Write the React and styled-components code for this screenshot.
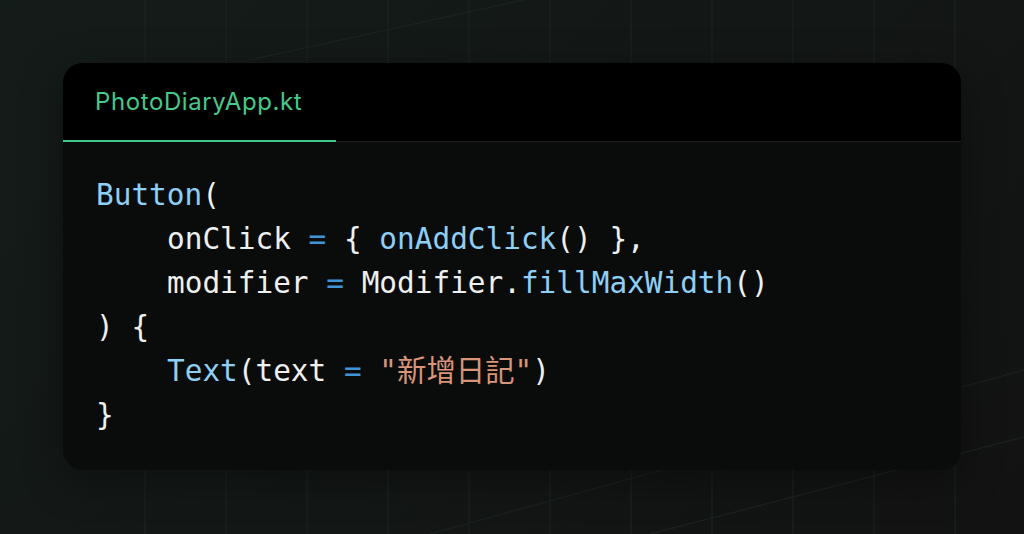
import React from "react";
import styled, { createGlobalStyle } from "styled-components";

const GlobalStyle = createGlobalStyle`
  html, body {
    margin: 0;
    padding: 0;
    background: #121414;
  }
`;

const Page = styled.main`
  position: relative;
  width: 1024px;
  height: 534px;
  overflow: hidden;
  box-sizing: border-box;
  padding: 63px 63px 0 63px;
  background: linear-gradient(135deg, #141c1a 0%, #131816 45%, #121212 100%);
`;

// background grid is decoration, drawn behind the card
const Grid = styled.svg`
  position: absolute;
  inset: 0;
  pointer-events: none;
`;

const Card = styled.section`
  position: relative;
  height: 407px;
  border-radius: 20px;
  overflow: hidden;
  background: #0a0c0c;
  box-shadow: 0 10px 40px rgba(0, 0, 0, 0.35);
  display: flex;
  flex-direction: column;
`;

const Header = styled.header`
  height: 78px;
  background: #000;
  border-bottom: 1px solid #1d2020;
  display: flex;
  align-items: stretch;
`;

const Tab = styled.div`
  width: 273px;
  box-sizing: border-box;
  padding-left: 32px;
  margin-bottom: -1px;
  border-bottom: 2px solid #43c98b;
  display: flex;
  align-items: center;
  color: #45c98c;
  font-family: Inter, "Noto Sans", sans-serif;
  font-size: 24px;
  letter-spacing: 0.6px;
`;

const Code = styled.pre`
  margin: 0;
  padding: 31px 33px 0 33px;
  font-family: "DejaVu Sans Mono", "Noto Sans CJK TC", monospace;
  font-size: 29.4px;
  line-height: 44px;
  color: #eef0f0;
`;

const Line = styled.div`
  padding-left: ${(p) => (p.indent ? "71px" : "0")};
  white-space: pre;
`;

const Fn = styled.span`
  color: #8ecff6;
`;

const Op = styled.span`
  color: #3f95d6;
`;

const Str = styled.span`
  color: #d9947a;
`;

const verticals = [145, 226, 307, 388, 469, 550, 631, 712, 793, 874, 955];

const App = () => {
  return (
    <Page>
      <GlobalStyle />
      <Grid width="1024" height="534" viewBox="0 0 1024 534">
        {verticals.map((x) => (
          <line key={x} x1={x} y1="0" x2={x} y2="534" stroke="#1b2624" strokeWidth="1" />
        ))}
        <line x1="250" y1="60" x2="1024" y2="-110" stroke="#1b2624" strokeWidth="1" />
        <line x1="650" y1="534" x2="1024" y2="437" stroke="#1b2624" strokeWidth="1" />
        <line x1="430" y1="534" x2="1024" y2="370" stroke="#1a2422" strokeWidth="1" />
      </Grid>
      <Card>
        <Header>
          <Tab>PhotoDiaryApp.kt</Tab>
        </Header>
        <Code>
          <Line>
            <Fn>Button</Fn>(
          </Line>
          <Line indent>
            onClick <Op>=</Op> {"{ "}
            <Fn>onAddClick</Fn>() {"},"}
          </Line>
          <Line indent>
            modifier <Op>=</Op> Modifier.<Fn>fillMaxWidth</Fn>()
          </Line>
          <Line>{") {"}</Line>
          <Line indent>
            <Fn>Text</Fn>(text <Op>=</Op> <Str>"新增日記"</Str>)
          </Line>
          <Line>{"}"}</Line>
        </Code>
      </Card>
    </Page>
  );
};

export default App;
